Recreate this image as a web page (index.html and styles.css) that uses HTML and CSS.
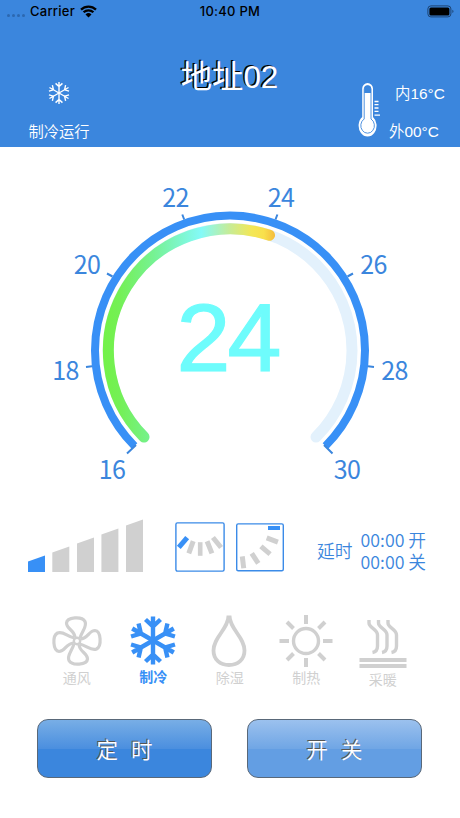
FILE: index.html
```html
<!DOCTYPE html>
<html lang="zh">

<head>
    <meta charset="UTF-8">
    <meta name="viewport" content="width=device-width, initial-scale=1.0">
    <title>地址02</title>
    <link rel="stylesheet" href="styles.css">
</head>

<body>
    <div class="app">
        <header class="header">
            <div class="status-bar">
                <div class="carrier">
                    <span class="signal"><i></i><i></i><i></i><i></i></span>
                    <span>Carrier</span>
                    <svg width="17" height="13" viewBox="0 0 17 13">
                        <path d="M1 4.6A10.8 10.8 0 0 1 16 4.6M3.6 7.3A7 7 0 0 1 13.4 7.3" fill="none" stroke="#000" stroke-width="2.3" />
                        <path d="M8.5 12.4L5.5 9.4A4.3 4.3 0 0 1 11.5 9.4Z" />
                    </svg>
                </div>
                <div class="time">10:40 PM</div>
                <svg class="battery" width="28" height="13" viewBox="0 0 28 13">
                    <rect x="0.9" y="0.9" width="23" height="11" rx="3" fill="none" stroke="#1d4371" />
                    <rect x="2.4" y="2.4" width="20" height="8" rx="1.5" />
                    <path d="M25.4 4.8Q27.6 6.4 25.4 8Z" fill="#1d4371" />
                </svg>
            </div>
            <div class="summary">
                <div class="running">
                    <svg width="22" height="22" viewBox="-24 -24 48 48">
                        <defs>
                            <g id="arm">
                                <path d="M0 0V-24M-7.5 -21L0 -14L7.5 -21" />
                            </g>
                            <g id="flake" fill="none">
                                <use href="#arm" />
                                <use href="#arm" transform="rotate(60)" />
                                <use href="#arm" transform="rotate(120)" />
                                <use href="#arm" transform="rotate(180)" />
                                <use href="#arm" transform="rotate(240)" />
                                <use href="#arm" transform="rotate(300)" />
                            </g>
                        </defs>
                        <use href="#flake" stroke="#fff" stroke-width="3" />
                    </svg>
                    <span>制冷运行</span>
                </div>
                <h1 class="title">地址02</h1>
                <div class="temps">
                    <svg width="24" height="58" viewBox="0 0 24 58">
                        <path d="M4.2 36V7.5a5.4 5.4 0 0 1 10.8 0V36A9 10.8 0 1 1 4.2 36Z" fill="#fff" />
                        <path d="M6.2 38V8a3.4 3.4 0 0 1 6.8 0V38A6.8 7.6 0 1 1 6.2 38Z" fill="none" stroke="#3b86dd" stroke-width="0.9" />
                        <path d="M6.2 12V8a3.4 3.4 0 0 1 6.8 0V12Z" fill="#3b86dd" />
                        <path d="M16.5 20.5h4M16.5 23.7h4M16.5 27h4M16.5 30.4h4M16.5 34.2h5.5" stroke="#fff" stroke-width="1.3" />
                    </svg>
                    <div class="readings">
                        <span class="inside">内16°C</span>
                        <span>外00°C</span>
                    </div>
                </div>
            </div>
        </header>

        <svg class="dial" width="460" height="353" viewBox="0 147 460 353">
            <defs>
                <linearGradient id="heat" gradientUnits="userSpaceOnUse" x1="102" y1="0" x2="276" y2="0">
                    <stop offset="0" stop-color="#72f247" />
                    <stop offset="0.1" stop-color="#74f055" />
                    <stop offset="0.3" stop-color="#76f294" />
                    <stop offset="0.57" stop-color="#84faf8" />
                    <stop offset="0.73" stop-color="#c5ec98" />
                    <stop offset="0.86" stop-color="#f3e756" />
                    <stop offset="0.93" stop-color="#f9e04c" />
                    <stop offset="1" stop-color="#f4b93b" />
                </linearGradient>
            </defs>
            <g fill="none">
                <path d="M134.5 446A135 135 0 1 1 325.5 446" stroke="#3890f6" stroke-width="8" />
                <path d="M144 437A122 122 0 1 1 316 437" stroke="#e3f1fc" stroke-width="11" stroke-linecap="round" />
                <path d="M144 437A122 122 0 0 1 269.5 235.3" stroke="url(#heat)" stroke-width="11" stroke-linecap="round" />
                <g stroke="#3b86dd" stroke-width="2">
                    <path d="M136 445L127 453.5M92 366.3L86 367M112.5 276.5L107 273.5M184.2 219.5L182.3 214.5" />
                    <path d="M324 445L332.5 453.5M368 366.3L374 367M347.5 276.5L353 273.5M275.5 219.5L277.4 214.5" />
                </g>
            </g>
            <g class="scale">
                <text x="112" y="478.5">16</text>
                <text x="65.5" y="379.5">18</text>
                <text x="87" y="274">20</text>
                <text x="175.5" y="206.5">22</text>
                <text x="281" y="206.5">24</text>
                <text x="373.5" y="274">26</text>
                <text x="394.5" y="379.5">28</text>
                <text x="347" y="478.5">30</text>
            </g>
            <text class="target" x="227.5" y="370.5">24</text>
        </svg>

        <div class="status-row">
            <svg class="fan-speed" width="116" height="54" viewBox="0 0 116 54" fill="#d0d0d0">
                <path d="M0 42.5L17 36.5V53H0Z" fill="#3890f6" />
                <path d="M24.3 33.5L41.3 27.5V53H24.3Z" />
                <path d="M49 24.5L66 18.5V53H49Z" />
                <path d="M73.4 15.5L90.4 9.5V53H73.4Z" />
                <path d="M98 6.5L115 0.5V53H98Z" />
            </svg>
            <svg class="swing" width="50" height="52" viewBox="0 0 50 52" fill="#d0d0d0">
                <rect x="0.9" y="1.9" width="48.2" height="48.2" rx="1.5" fill="#fff" stroke="#3b8be8" stroke-width="1.4" />
                <rect x="-2.5" y="-6.5" width="5" height="13" transform="translate(8 21.5) rotate(40)" fill="#3890f6" />
                <rect x="-2.5" y="-6.5" width="5" height="13" transform="translate(16 26.3) rotate(20)" />
                <rect x="-2.3" y="-6.8" width="4.6" height="13.6" transform="translate(25.2 28)" />
                <rect x="-2.5" y="-6.5" width="5" height="13" transform="translate(34.5 26.3) rotate(-22)" />
                <rect x="-2.5" y="-6.5" width="5" height="13" transform="translate(42 21.5) rotate(-39)" />
            </svg>
            <svg class="swing" width="50" height="52" viewBox="0 0 50 52" fill="#d0d0d0">
                <rect x="1.7" y="2.9" width="46.6" height="46.8" rx="1.5" fill="#fff" stroke="#3b8be8" stroke-width="1.4" />
                <rect x="33" y="5" width="12" height="4" fill="#3890f6" />
                <rect x="-6" y="-2.5" width="12" height="5" transform="translate(37.3 19) rotate(21)" />
                <rect x="-6" y="-2.5" width="12" height="5" transform="translate(30.5 29.3) rotate(40)" />
                <rect x="-6" y="-2.5" width="12" height="5" transform="translate(20 37.3) rotate(57)" />
                <rect x="-6" y="-2.5" width="12" height="5" transform="translate(8 41.3) rotate(83)" />
            </svg>
            <div class="delay">
                <span class="delay-label">延时</span>
                <div class="delay-times">
                    <span>00:00 开</span>
                    <span>00:00 关</span>
                </div>
            </div>
        </div>

        <div class="modes">
            <div class="mode">
                <svg width="54" height="54" viewBox="-27 -27 54 54" fill="none" stroke="currentColor" stroke-width="3.2">
                    <defs>
                        <path id="blade" d="M-2 -3.5C-2.5 -11 -10.5 -12 -10.5 -18C-10 -24 5 -25 8 -19.5C10.5 -14 4.5 -10 3 -2.5" />
                    </defs>
                    <circle r="3.2" stroke-width="2.4" />
                    <use href="#blade" />
                    <use href="#blade" transform="rotate(90)" />
                    <use href="#blade" transform="rotate(180)" />
                    <use href="#blade" transform="rotate(270)" />
                </svg>
                <span>通风</span>
            </div>
            <div class="mode active">
                <svg width="54" height="54" viewBox="-27 -26.5 54 54">
                    <use href="#flake" stroke="currentColor" stroke-width="4.4" />
                </svg>
                <span>制冷</span>
            </div>
            <div class="mode">
                <svg width="54" height="54" viewBox="0 0 54 54" fill="none" stroke="currentColor" stroke-width="3.8">
                    <path d="M25.5 1.5C25.5 15 10.5 23 10.5 36.5C10.5 45.5 17 51 26 51S41.5 45.5 41.5 36.5C41.5 23 26.5 15 26.5 1.5" />
                </svg>
                <span>除湿</span>
            </div>
            <div class="mode">
                <svg width="54" height="54" viewBox="-27 -27 54 54" fill="none" stroke="currentColor" stroke-width="4">
                    <circle r="12.5" stroke-width="3.4" />
                    <path d="M0 -26V-17M0 17V26M-26.5 0H-17M17 0H26.5M-19 -19L-12.5 -12.5M19 -19L12.5 -12.5M-19 19L-12.5 12.5M19 19L12.5 12.5" />
                </svg>
                <span>制热</span>
            </div>
            <div class="mode heating">
                <svg width="54" height="54" viewBox="0 0 54 54" fill="none" stroke="currentColor" stroke-width="3.4">
                    <path d="M13 6V9C13 14 21.5 15 21.5 21V32C21.5 36 19.5 38 16.5 38.5" />
                    <path d="M22.5 6V9C22.5 14 31 15 31 21V32C31 36 29 38 26 38.5" />
                    <path d="M32 6V9C32 14 40.5 15 40.5 21V32C40.5 36 38.5 38 35.5 38.5" />
                    <path d="M3.5 46H50.5M3.5 52H50.5" stroke-width="4" />
                </svg>
                <span>采暖</span>
            </div>
        </div>

        <div class="buttons">
            <button class="timer">定 时</button>
            <button class="power">开 关</button>
        </div>
    </div>
</body>

</html>
```
FILE: styles.css
```css
body {
    margin: 0px;
    background: #fff;
    font-family: "Liberation Sans", "Noto Sans CJK SC", sans-serif;
}

.app {
    width: 460px;
    height: 818px;
    overflow: hidden;
}

.header {
    height: 147px;
    background: #3b86dd;
    color: #fff;
}

/* status bar */
.status-bar {
    display: grid;
    grid-template-columns: 1fr auto 1fr;
    align-items: center;
    height: 22px;
    color: #000;
    font: 500 13px/22px Inter, sans-serif;
    letter-spacing: 0.25px;
}

.carrier {
    display: flex;
    align-items: center;
    gap: 5px;
    padding-left: 7px;
}

.signal {
    display: flex;
    gap: 2px;
    margin: 8px 0px 0px 0px;
}

.signal i {
    width: 3px;
    height: 3px;
    border-radius: 50%;
    background: #2c68b0;
}

.battery {
    justify-self: end;
    margin-right: 5px;
}

/* current state */
.summary {
    display: grid;
    grid-template-columns: 118px 1fr 118px;
    height: 125px;
}

.running {
    display: flex;
    flex-direction: column;
    align-items: center;
    padding-top: 60px;
    font-size: 15.3px;
    font-weight: 350;
    line-height: 20px;
}

.running span {
    margin-top: 18px;
}

.title {
    margin: 36px 0px 0px;
    padding-right: 1px;
    text-align: center;
    font-size: 31.3px;
    font-weight: 400;
    line-height: 40px;
    text-shadow: -1.5px -1px 0px #000;
}

.temps {
    display: flex;
    gap: 7px;
    padding: 59px 0px 0px 16px;
    font-size: 15.4px;
    font-weight: 350;
    white-space: nowrap;
}

.readings {
    display: flex;
    flex-direction: column;
    gap: 18px;
    line-height: 20px;
    padding-top: 3px;
}

.readings .inside {
    padding-left: 6px;
}

/* dial */
.dial {
    display: block;
}

.scale {
    fill: #3b86dd;
    font-family: "Noto Sans CJK SC", sans-serif;
    font-size: 25px;
    letter-spacing: -0.6px;
    text-anchor: middle;
}

.target {
    fill: #6efcfc;
    stroke: #6efcfc;
    stroke-width: 1.2px;
    font-size: 97px;
    letter-spacing: -3px;
    text-anchor: middle;
}

/* fan, swing and delay */
.status-row {
    display: flex;
    align-items: flex-start;
    height: 95px;
    padding: 19px 0px 0px 28px;
    box-sizing: border-box;
}

.swing {
    margin-top: 2px;
    margin-right: 10px;
}

.fan-speed {
    margin-right: 31px;
}

.delay {
    display: flex;
    align-items: center;
    gap: 8px;
    margin: 9px 0px 0px 22px;
    color: #3b86dd;
    font-family: "Noto Sans CJK SC", sans-serif;
    font-size: 17.8px;
    font-weight: 350;
}

.delay-times {
    display: flex;
    flex-direction: column;
    line-height: 22px;
    white-space: nowrap;
}

/* modes */
.modes {
    display: grid;
    grid-template-columns: repeat(5, 76.5px);
    height: 95px;
    padding: 19px 0px 0px 38.5px;
}

.mode {
    display: flex;
    flex-direction: column;
    align-items: center;
    color: #d0d0d0;
    font-family: "Noto Sans CJK SC", serif;
    font-size: 14px;
    line-height: 18px;
}

.mode.active {
    color: #3890f6;
    font-weight: 700;
}

.mode.active span {
    margin-top: -1px;
}

.mode.heating span {
    margin-top: 2px;
}

/* buttons */
.buttons {
    display: flex;
    gap: 35px;
    padding: 10px 37px 0px;
}

button {
    width: 175px;
    height: 59px;
    padding: 0px 0px 1px;
    border: 1.5px solid #596879;
    border-radius: 11px;
    color: #fff;
    font-family: "Liberation Sans", "Noto Sans CJK SC", sans-serif;
    font-size: 21.5px;
    font-weight: 350;
    word-spacing: 7px;
    text-shadow: -1px -1px 0px #555;
}

.timer {
    background: linear-gradient(#78aee6, #4b8fdf 50%, #3b86dd 50%);
}

.power {
    background: linear-gradient(#9bc1ee, #70a6e5 50%, #639ee3 50%);
}
```
